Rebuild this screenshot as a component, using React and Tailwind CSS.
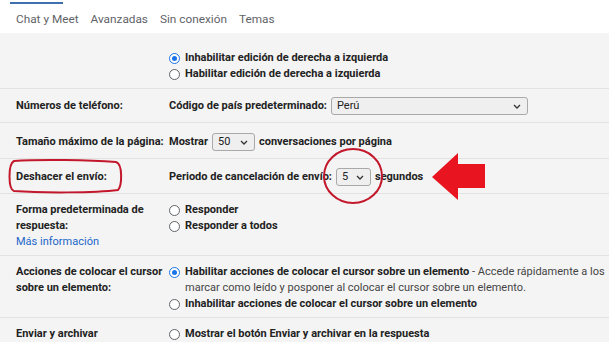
import React from 'react';

function Radio({ checked }) {
  return (
    <span className="mt-[2.5px] flex h-[11px] w-[11px] shrink-0 items-center justify-center rounded-full border border-[#5f6368] bg-white data-[on=true]:border-[#1a73e8]" data-on={checked}>
      {checked && <span className="h-[5px] w-[5px] rounded-full bg-[#1a73e8]" />}
    </span>
  );
}

function Option({ checked, children }) {
  return (
    <div className="flex items-start gap-[5px] whitespace-nowrap">
      <Radio checked={checked} />
      <span>{children}</span>
    </div>
  );
}

function Select({ value, className }) {
  return (
    <span className={`inline-flex h-[18px] items-center justify-between rounded-[3px] border border-[#a9a9a9] bg-[#efefef] pl-[5px] pr-[6px] font-normal text-[#222] ${className}`}>
      <span>{value}</span>
      <svg width="8" height="5" viewBox="0 0 8 5" className="shrink-0">
        <path d="M1 1l3 3 3-3" fill="none" stroke="#333" strokeWidth="1.3" />
      </svg>
    </span>
  );
}

function Row({ label, children, className = '' }) {
  return (
    <div className={`grid grid-cols-[153px_1fr] border-t border-[#e2e2e2] px-4 ${className}`}>
      <div>{label}</div>
      <div>{children}</div>
    </div>
  );
}

export default function App() {
  return (
    <div className="relative h-[342px] w-[609px] overflow-hidden bg-[#f4f4f4] text-[11px] leading-[16px] font-bold text-[#222]" style={{ fontFamily: 'Roboto, "Liberation Sans", sans-serif' }}>
      <div className="bg-white">
        <div className="ml-[10px] h-[2px] w-[53px] translate-y-[2px] bg-[#3f6fb0]" />
        <div className="flex h-[31px] items-center gap-[12px] pl-4 pt-[3px] text-[11.8px] font-normal text-[#5f6368]">
          <span>Chat y Meet</span>
          <span>Avanzadas</span>
          <span>Sin conexión</span>
          <span>Temas</span>
        </div>
      </div>

      <div className="grid grid-cols-[153px_1fr] px-4 pt-[17px] pb-[6px]">
        <div />
        <div className="flex flex-col">
          <Option checked>Inhabilitar edición de derecha a izquierda</Option>
          <Option>Habilitar edición de derecha a izquierda</Option>
        </div>
      </div>

      <Row label={<span className="leading-[18px]">Números de teléfono:</span>} className="h-[34px] pt-[8px]">
        <div className="flex items-center gap-[4px]">
          <span>Código de país predeterminado:</span>
          <Select value="Perú" className="w-[197px]" />
        </div>
      </Row>

      <Row label={<span className="leading-[18px]">Tamaño máximo de la página:</span>} className="h-[36px] pt-[10px]">
        <div className="flex items-center gap-[4px]">
          <span>Mostrar</span>
          <Select value="50" className="w-[43px]" />
          <span>conversaciones por página</span>
        </div>
      </Row>

      <Row label={<span className="leading-[18px]">Deshacer el envío:</span>} className="h-[35px] pt-[9px]">
        <div className="flex items-center gap-[4px]">
          <span>Periodo de cancelación de envío:</span>
          <Select value="5" className="w-[35px]" />
          <span>segundos</span>
        </div>
      </Row>

      <Row
        label={
          <div>
            <div>Forma predeterminada de</div>
            <div>respuesta:</div>
            <div className="font-normal text-[#1a66c9]">Más información</div>
          </div>
        }
        className="h-[62px] pt-[8px]"
      >
        <Option>Responder</Option>
        <Option>Responder a todos</Option>
      </Row>

      <Row
        label={
          <div className="whitespace-nowrap">
            <div>Acciones de colocar el cursor</div>
            <div>sobre un elemento:</div>
          </div>
        }
        className="h-[62px] pt-[8px]"
      >
        <Option checked>
          Habilitar acciones de colocar el cursor sobre un elemento
          <span className="font-normal text-[#444]"> - Accede rápidamente a los</span>
        </Option>
        <div className="whitespace-nowrap pl-4 font-normal text-[#444]">marcar como leído y posponer al colocar el cursor sobre un elemento.</div>
        <Option>Inhabilitar acciones de colocar el cursor sobre un elemento</Option>
      </Row>

      <Row label="Enviar y archivar" className="pt-[8px] pb-4">
        <Option>Mostrar el botón Enviar y archivar en la respuesta</Option>
      </Row>

      <svg className="pointer-events-none absolute left-0 top-0" width="609" height="342" viewBox="0 0 609 342">
        <path d="M14 161 C40 159 90 160 116 162 C123 164 122 186 118 190 C95 193 40 193 14 191 C8 189 8 164 14 161 Z" fill="none" stroke="#c3182c" strokeWidth="2" />
        <ellipse cx="353" cy="176" rx="29" ry="27" fill="none" stroke="#c3182c" strokeWidth="2" />
        <path d="M432 177 L458 153 L458 164 L485 164 L485 188 L458 188 L458 200 Z" fill="#e8141f" />
      </svg>
    </div>
  );
}
